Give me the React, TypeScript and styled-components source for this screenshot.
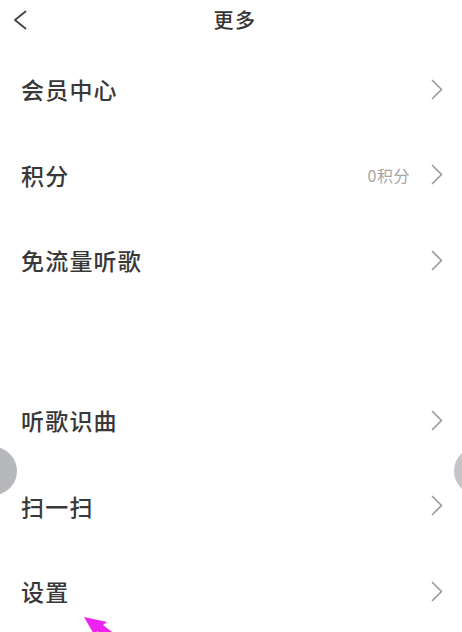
import React from "react";
import styled, { createGlobalStyle } from "styled-components";

const GlobalStyle = createGlobalStyle`
  html, body {
    margin: 0;
    padding: 0;
    background: #ffffff;
  }
  body {
    font-family: "Noto Sans CJK SC", "Noto Sans", sans-serif;
  }
`;

const Screen = styled.div`
  position: relative;
  width: 462px;
  height: 632px;
  overflow: hidden;
  background: #ffffff;
`;

const TopBar = styled.header`
  display: flex;
  align-items: center;
  justify-content: center;
  position: relative;
  height: 38px;
`;

const BackButton = styled.button`
  position: absolute;
  left: 13px;
  top: 10px;
  display: flex;
  padding: 0;
  border: none;
  background: none;
  cursor: pointer;
`;

const Title = styled.h1`
  margin: 0 0 0 8px;
  font-size: 20px;
  font-weight: 500;
  color: #333333;
  letter-spacing: 1.5px;
`;

const Menu = styled.ul`
  list-style: none;
  margin: 8.5px 0 0;
  padding: 0;
`;

const Row = styled.li`
  display: flex;
  align-items: center;
  height: 85.5px;
  padding: 0 19px 0 21px;
`;

const Spacer = styled.li`
  height: 74.5px;
`;

const Label = styled.span`
  flex: 1;
  font-size: 23px;
  font-weight: 500;
  letter-spacing: 1.2px;
  color: #383838;
`;

const Extra = styled.span`
  margin-right: 21px;
  font-size: 16px;
  letter-spacing: 0.5px;
  color: #a6a6a6;
`;

const Bubble = styled.div<{ $side: "left" | "right"; $tone: string }>`
  position: absolute;
  top: 447px;
  ${(p) => (p.$side === "left" ? "left: -31px;" : "left: 454px;")}
  width: 48px;
  height: 48px;
  border-radius: 50%;
  background: ${(p) => p.$tone};
`;

const Pointer = styled.svg`
  position: absolute;
  left: 80px;
  top: 612px;
`;

const Chevron = () => (
  <svg width="12" height="21" viewBox="0 0 12 21">
    <polyline
      points="1.5,1.5 10.5,10.5 1.5,19.5"
      fill="none"
      stroke="#9b9b9b"
      strokeWidth="1.7"
      strokeLinecap="round"
      strokeLinejoin="round"
    />
  </svg>
);

const BackIcon = () => (
  <svg width="15" height="20" viewBox="0 0 15 20">
    <polyline
      points="12.5,1.5 2,10 12.5,18.5"
      fill="none"
      stroke="#444444"
      strokeWidth="1.9"
      strokeLinecap="round"
      strokeLinejoin="round"
    />
  </svg>
);

type Item = { label: string; extra?: string };

const topItems: Item[] = [
  { label: "会员中心" },
  { label: "积分", extra: "0积分" },
  { label: "免流量听歌" },
];

const bottomItems: Item[] = [
  { label: "听歌识曲" },
  { label: "扫一扫" },
  { label: "设置" },
];

const MenuRow: React.FC<{ item: Item }> = ({ item }) => (
  <Row>
    <Label>{item.label}</Label>
    {item.extra && <Extra>{item.extra}</Extra>}
    <Chevron />
  </Row>
);

export default function App() {
  return (
    <Screen>
      <GlobalStyle />
      <TopBar>
        <BackButton aria-label="返回">
          <BackIcon />
        </BackButton>
        <Title>更多</Title>
      </TopBar>
      <Menu>
        {topItems.map((item) => (
          <MenuRow key={item.label} item={item} />
        ))}
        <Spacer />
        {bottomItems.map((item) => (
          <MenuRow key={item.label} item={item} />
        ))}
      </Menu>
      <Bubble $side="left" $tone="#b7b8bc" />
      <Bubble $side="right" $tone="#c4c5c9" />
      <Pointer width="50" height="20" viewBox="0 0 50 20">
        <polygon
          points="4,5 27,10 23,13 40,26 30,30 17,19 15,24"
          fill="#ee22ee"
        />
      </Pointer>
    </Screen>
  );
}
